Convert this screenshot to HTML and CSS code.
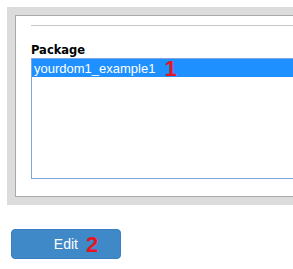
FILE: index.html
```html
<!DOCTYPE html>
<html lang="en">
<head>
  <meta charset="UTF-8" />
  <meta name="viewport" content="width=device-width, initial-scale=1.0" />
  <title>Package</title>
  <link rel="stylesheet" href="styles.css">
</head>
<body>
  <div class="frame">
    <div class="panel">
      <hr class="rule">
      <div class="label">Package</div>
      <div class="listbox">
        <div class="item selected">yourdom1_example1 <span class="step">1</span></div>
      </div>
    </div>
  </div>

  <button class="edit-btn">Edit <span class="step">2</span></button>
</body>
</html>
```

FILE: styles.css
```css
* { box-sizing: border-box; margin: 0; padding: 0; }
body {
  font-family: "Liberation Sans", Arial, sans-serif;
  background: #fff;
  color: #000;
}
.frame {
  margin: 7px 0 0 7px;
  background: #dcdcdc;
  padding: 8px 0 8px 8px;
}
.panel {
  background: #fff;
  border: 1px solid #a9a9a9;
  border-right: none;
  padding: 9px 0 17px 15px;
}
.rule {
  border: none;
  border-top: 1px solid #c8c8c8;
  margin-bottom: 17px;
}
.label {
  font-family: "DejaVu Sans", Tahoma, sans-serif;
  font-weight: bold;
  font-size: 11.5px;
  line-height: 14px;
  margin-bottom: 1px;
}
.listbox {
  height: 121px;
  border: 1px solid #7fa4de;
  border-right: none;
  background: #fff;
}
.item {
  display: flex;
  align-items: center;
  height: 18px;
  font-size: 13px;
  padding-left: 2px;
  white-space: nowrap;
}
.item.selected {
  background: #1e90ff;
  color: #fff;
}
.step {
  color: #e8141f;
  font-weight: bold;
  font-size: 22px;
  line-height: 18px;
  margin-left: 9px;
  padding-top: 2px;
}
.edit-btn {
  display: flex;
  justify-content: center;
  align-items: center;
  margin: 24px 0 0 11px;
  padding-left: 20px;
  width: 110px;
  height: 30px;
  background: #3f89c9;
  border: 1px solid #3a80c0;
  border-radius: 4px;
  color: #fff;
  font-family: "Liberation Sans", Arial, sans-serif;
  font-size: 14px;
}
.edit-btn .step {
  margin-left: 8px;
}
```
